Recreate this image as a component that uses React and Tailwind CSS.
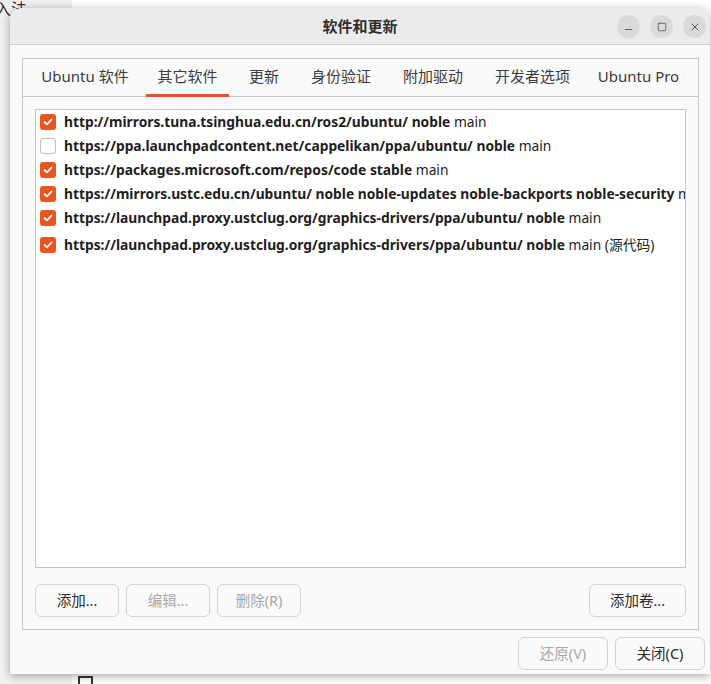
import { Minus, Square, X } from "lucide-react";

const font = { fontFamily: '"Noto Sans", "Noto Sans CJK SC", sans-serif' };

const tabs = [
    { label: "Ubuntu 软件", w: "w-[106px]" },
    { label: "其它软件", w: "w-[83px]", active: true },
    { label: "更新", w: "w-[54px]" },
    { label: "身份验证", w: "w-[84px]" },
    { label: "附加驱动", w: "w-[84px]" },
    { label: "开发者选项", w: "w-[99px]" },
    { label: "Ubuntu Pro", w: "w-[97px]" },
];

const sources = [
    { on: true, url: "http://mirrors.tuna.tsinghua.edu.cn/ros2/ubuntu/ noble", rest: "main" },
    { on: false, url: "https://ppa.launchpadcontent.net/cappelikan/ppa/ubuntu/ noble", rest: "main" },
    { on: true, url: "https://packages.microsoft.com/repos/code stable", rest: "main" },
    { on: true, url: "https://mirrors.ustc.edu.cn/ubuntu/ noble noble-updates noble-backports noble-security", rest: "main" },
    { on: true, url: "https://launchpad.proxy.ustclug.org/graphics-drivers/ppa/ubuntu/ noble", rest: "main" },
    { on: true, url: "https://launchpad.proxy.ustclug.org/graphics-drivers/ppa/ubuntu/ noble", rest: "main (源代码)", last: true },
];

const CheckBox = ({ on }) =>
    on ? (
        <div className="w-4 h-4 rounded-[3px] bg-[#e95420] flex items-center justify-center shrink-0">
            <svg width="10" height="8" viewBox="0 0 10 8">
                <path d="M1.5 4 L4 6.3 L8.5 1.5" stroke="white" strokeWidth="1.8" fill="none" strokeLinecap="round" strokeLinejoin="round" />
            </svg>
        </div>
    ) : (
        <div className="w-4 h-4 rounded-[3px] bg-white border border-[#bdbdbd] shrink-0" />
    );

const Btn = ({ children, disabled, className = "" }) => (
    <button
        className={`h-[33px] rounded-[6px] border border-[#d2d2d2] bg-[#fafafa] text-[14.5px] ${
            disabled ? "text-[#a8a8a8]" : "text-[#2e2e2e]"
        } ${className}`}
    >
        {children}
    </button>
);

const WinBtn = ({ children }) => (
    <div className="w-[23px] h-[23px] rounded-full bg-[#dadada] flex items-center justify-center text-[#333]">
        {children}
    </div>
);

export default function App() {
    return (
        <div className="relative w-[711px] h-[684px] overflow-hidden bg-white" style={font}>
            {/* desktop behind the window */}
            <div className="absolute left-0 top-0 w-[72px] h-full bg-[#f1f1f1]" />
            <div className="absolute left-[-5px] top-[-3px] text-[16px] text-[#333]">入法</div>
            <div className="absolute left-[78px] top-[676px] w-[15px] h-[14px] border-2 border-[#333]" />

            {/* window */}
            <div className="absolute left-[10px] top-[8px] w-[700px] h-[666px] rounded-t-[12px] bg-[#fafafa] shadow-[0_2px_10px_rgba(0,0,0,0.35)] flex flex-col">
                <div className="h-[37px] shrink-0 rounded-t-[12px] bg-[#ebebeb] border-b border-[#cdcdcd] flex items-center relative">
                    <div className="flex-1 text-center text-[15px] font-bold text-[#2e2e2e]">软件和更新</div>
                    <div className="absolute right-[4px] top-[7px] flex gap-[10px]">
                        <WinBtn>
                            <Minus size={11} strokeWidth={1.6} className="mt-[6px]" />
                        </WinBtn>
                        <WinBtn>
                            <Square size={10} strokeWidth={1.6} />
                        </WinBtn>
                        <WinBtn>
                            <X size={12} strokeWidth={1.6} />
                        </WinBtn>
                    </div>
                </div>

                <div className="flex-1 flex flex-col pl-[12px] pr-[11px] pt-[13px]">
                    {/* notebook */}
                    <div className="h-[572px] border border-[#c8c8c8] flex flex-col">
                        <div className="h-[38px] shrink-0 border-b border-[#c8c8c8] flex pl-[9px]">
                            {tabs.map((t, i) => (
                                <div
                                    key={i}
                                    className={`${t.w} mr-[8px] flex items-center justify-center text-[15px] text-[#3c3c3c] border-b-[3px] ${
                                        t.active ? "border-[#e95420]" : "border-transparent"
                                    } mb-[-1px]`}
                                >
                                    {t.label}
                                </div>
                            ))}
                        </div>

                        <div className="flex-1 flex flex-col px-[12px] pt-[12px] pb-[12px]">
                            <div className="flex-1 bg-white border border-[#c4c4c4] overflow-hidden">
                                {sources.map((s, i) => (
                                    <div
                                        key={i}
                                        className={`h-[24px] flex items-center pl-[4px] gap-[8px] whitespace-nowrap text-[13.8px] text-[#1e1e1e] ${
                                            s.last ? "mt-[3px]" : ""
                                        }`}
                                    >
                                        <CheckBox on={s.on} />
                                        <span>
                                            <span className="font-bold">{s.url}</span> {s.rest}
                                        </span>
                                    </div>
                                ))}
                            </div>
                            <div className="mt-[16px] flex gap-[7px]">
                                <Btn className="w-[84px]">添加...</Btn>
                                <Btn className="w-[84px]" disabled>
                                    编辑...
                                </Btn>
                                <Btn className="w-[84px]" disabled>
                                    删除(R)
                                </Btn>
                                <Btn className="w-[97px] ml-auto">添加卷...</Btn>
                            </div>
                        </div>
                    </div>

                    <div className="mt-[7px] flex justify-end gap-[7px] mr-[-6px]">
                        <Btn className="w-[90px]" disabled>
                            还原(V)
                        </Btn>
                        <Btn className="w-[90px]">关闭(C)</Btn>
                    </div>
                </div>
            </div>
        </div>
    );
}
